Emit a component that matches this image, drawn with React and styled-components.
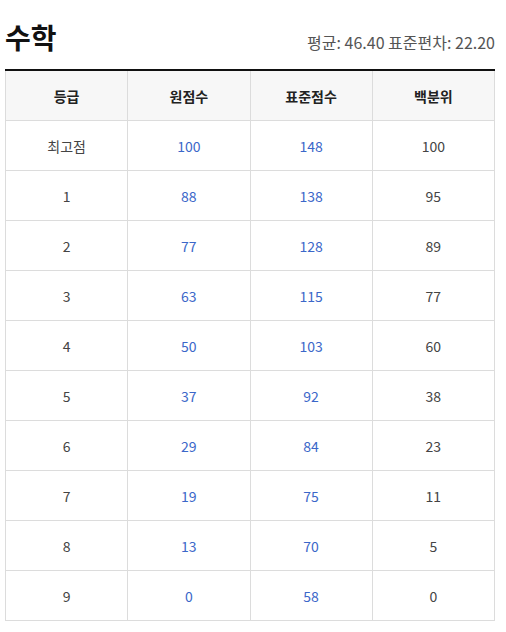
import React from 'react'
import styled, { createGlobalStyle } from 'styled-components'

const GlobalStyle = createGlobalStyle`
  body {
    margin: 0;
    background: #ffffff;
    font-family: "Noto Sans CJK KR", "Noto Sans", sans-serif;
  }
`

const Page = styled.div`
  width: 490px;
  padding: 17px 0 0 5px;
`

const Header = styled.div`
  display: flex;
  justify-content: space-between;
  align-items: baseline;
  height: 52px;
`

const Title = styled.h2`
  margin: 0;
  font-size: 28px;
  font-weight: 700;
  color: #111;
  line-height: 40px;
`

const Stats = styled.div`
  font-size: 16px;
  color: #555;
`

const Table = styled.table`
  width: 490px;
  border-collapse: collapse;
  table-layout: fixed;
  border-top: 2px solid #111;
`

const Th = styled.th`
  height: 49px;
  padding: 0;
  background: #f7f7f7;
  border: 1px solid #dcdcdc;
  border-top: none;
  font-size: 14px;
  font-weight: 700;
  color: #222;
  text-align: center;
`

const Td = styled.td`
  height: 49px;
  padding: 0;
  border: 1px solid #dcdcdc;
  font-size: 14px;
  text-align: center;
  color: ${props => (props.$link ? '#3b67c9' : '#444')};
`

const rows = [
  ['최고점', 100, 148, 100],
  ['1', 88, 138, 95],
  ['2', 77, 128, 89],
  ['3', 63, 115, 77],
  ['4', 50, 103, 60],
  ['5', 37, 92, 38],
  ['6', 29, 84, 23],
  ['7', 19, 75, 11],
  ['8', 13, 70, 5],
  ['9', 0, 58, 0],
]

export default function App() {
  return (
    <>
      <GlobalStyle />
      <Page>
        <Header>
          <Title>수학</Title>
          <Stats>평균: 46.40 표준편차: 22.20</Stats>
        </Header>
        <Table>
          <thead>
            <tr>
              <Th>등급</Th>
              <Th>원점수</Th>
              <Th>표준점수</Th>
              <Th>백분위</Th>
            </tr>
          </thead>
          <tbody>
            {rows.map(r => (
              <tr key={r[0]}>
                <Td>{r[0]}</Td>
                <Td $link>{r[1]}</Td>
                <Td $link>{r[2]}</Td>
                <Td>{r[3]}</Td>
              </tr>
            ))}
          </tbody>
        </Table>
      </Page>
    </>
  )
}
